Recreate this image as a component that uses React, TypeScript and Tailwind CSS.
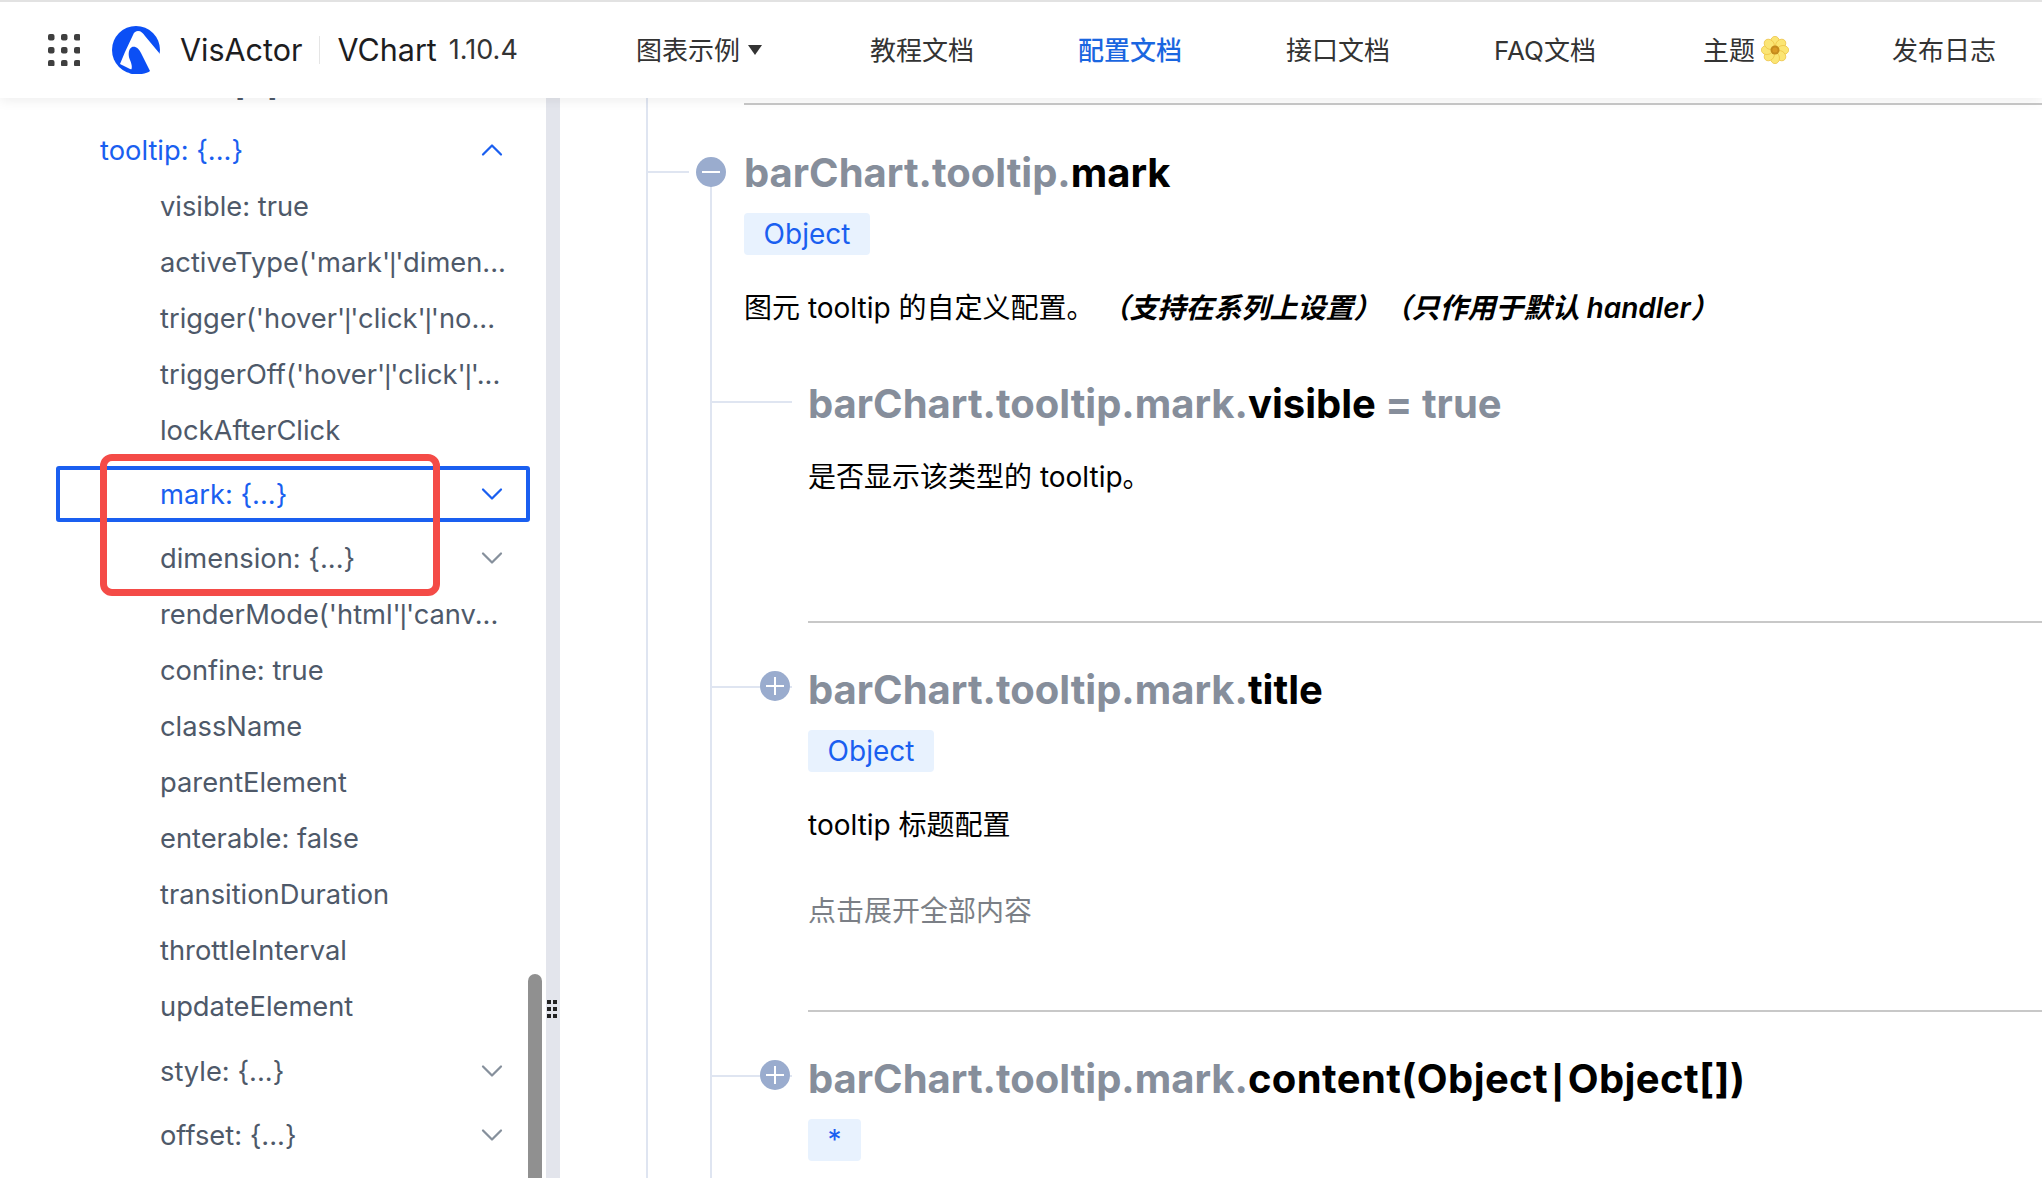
import { Fragment, type ReactNode } from "react"
import { ChevronDown, ChevronUp } from "lucide-react"

const navItems = ["教程文档", "配置文档", "接口文档", "FAQ文档"]

function Logo() {
  return (
    <svg width="48" height="48" viewBox="0 0 48 48">
      <circle cx="24" cy="24" r="24" fill="#0b4ff5" />
      <path d="M26 5C29 5 31 7 33 10L48 28V48H38L18 43L8 38L13 26L21 9C22 6 24 5 26 5Z" fill="#fff" />
      <path d="M20 21C24 20 27 23 29 27L38 45C36 47 28 49 24 48C21 48 19 48 17 47C20 44 21 41 18 34C16 30 16 23 20 21Z" fill="#0b4ff5" />
    </svg>
  )
}

function GridIcon() {
  return (
    <svg width="32" height="32" viewBox="0 0 32 32" fill="#3f3f3f">
      {[3, 16, 29].map((y) =>
        [3, 16, 29].map((x) => <rect key={`${x}-${y}`} x={x - 3} y={y - 3} width="6.5" height="6.5" rx="2" />)
      )}
    </svg>
  )
}

function Flower() {
  return (
    <svg width="28" height="28" viewBox="0 0 26 26">
      {[0, 45, 90, 135, 180, 225, 270, 315].map((a) => (
        <ellipse key={a} cx="13" cy="5.5" rx="4.2" ry="5.2" fill="#fbe573" stroke="#ecc144" strokeWidth="0.7" transform={`rotate(${a} 13 13)`} />
      ))}
      <circle cx="13" cy="13" r="4.2" fill="#c48a1c" />
      <circle cx="13" cy="13" r="2.4" fill="#d99a24" />
    </svg>
  )
}

function Header() {
  return (
    <header className="relative z-10 h-[98px] shrink-0 border-t-2 border-[#e2e2e2] bg-white flex items-center pl-[48px] pr-[46px] shadow-[0_2px_12px_rgba(0,0,0,0.08)]">
      <GridIcon />
      <div className="ml-[32px]"><Logo /></div>
      <span className="ml-[20px] text-[30.5px] text-[#1d1d1f]">VisActor</span>
      <span className="mx-[17px] h-[28px] w-px bg-[#e5e5e5]" />
      <span className="text-[30.5px] text-[#1d1d1f]">VChart</span>
      <span className="ml-[12px] text-[27px] text-[#333]">1.10.4</span>
      <nav className="ml-auto flex items-center gap-[104px] text-[26px] text-[#333]">
        <span className="flex items-center gap-[8px] mr-[4px]">
          图表示例
          <svg width="14" height="10" viewBox="0 0 14 10"><path d="M0 0H14L7 10Z" fill="#333" /></svg>
        </span>
        {navItems.map((item) => (
          <span key={item} className={item === "配置文档" ? "font-medium text-[#1a66e0]" : ""}>{item}</span>
        ))}
        <span className="flex items-center gap-[6px] ml-[3px] -mr-[1px]">主题 <Flower /></span>
        <span>发布日志</span>
      </nav>
    </header>
  )
}

// Inter's pipe is taller than the one in the page, so it gets its own font
function Piped({ text }: { text: string }) {
  return (
    <>
      {text.split("|").map((part, i) => (
        <Fragment key={i}>
          {i > 0 && <span className="-mx-px font-['Liberation_Sans']">|</span>}
          {part}
        </Fragment>
      ))}
    </>
  )
}

function Row({ label, className = "" }: { label: string; className?: string }) {
  return (
    <div className={`h-[56px] pl-[160px] flex items-center text-[#4e5969] whitespace-pre ${className}`}>
      <span><Piped text={label} /></span>
    </div>
  )
}

function ExpandRow({ label, active, className = "mt-[8px]" }: { label: string; active?: boolean; className?: string }) {
  return (
    <div className={`${className} h-[56px] ml-[56px] w-[474px] pl-[100px] pr-[16px] flex items-center justify-between rounded-[3px] border-[4px] ${active ? "border-[#1a5ff0] text-[#1a5ff0]" : "border-transparent text-[#4e5969]"}`}>
      <span className="pt-[2px]">{label}</span>
      <ChevronDown size={36} strokeWidth={1.5} className={active ? "text-[#1a5ff0]" : "text-[#86909c]"} />
    </div>
  )
}

function Sidebar() {
  return (
    <aside className="relative w-[546px] shrink-0 overflow-hidden text-[27.3px]">
      <div className="-mt-[39px]">
        <div className="h-[56px] pl-[100px] flex items-center text-[#4e5969]">crosshair: [...]</div>
        <div className="mt-[8px] h-[56px] pl-[100px] pr-[36px] flex items-center justify-between text-[#1a5ff0]">
          <span>tooltip: {"{...}"}</span>
          <ChevronUp size={36} strokeWidth={1.5} className="-mt-[2px]" />
        </div>
        <Row label="visible: true" />
        <Row label="activeType('mark'|'dimen..." />
        <Row label="trigger('hover'|'click'|'no..." />
        <Row label="triggerOff('hover'|'click'|'..." />
        <Row label="lockAfterClick" />
        <ExpandRow label="mark: {...}" active className="mt-[7px]" />
        <ExpandRow label="dimension: {...}" />
        <Row label="renderMode('html'|'canv..." className="mt-px" />
        <Row label="confine: true" />
        <Row label="className" />
        <Row label="parentElement" />
        <Row label="enterable: false" />
        <Row label="transitionDuration" />
        <Row label="throttleInterval" />
        <Row label="updateElement" />
        <ExpandRow label="style: {...}" />
        <ExpandRow label="offset: {...}" />
      </div>
      {/* scrollbar + highlight lie over the list */}
      <div className="absolute left-[528px] top-[876px] bottom-0 w-[14px] rounded-t-full bg-[#909090]" />
      <div className="absolute left-[100px] top-[356px] h-[142px] w-[340px] rounded-[12px] border-[7px] border-[#f44b47]" />
    </aside>
  )
}

function Divider() {
  return (
    <div className="relative w-[14px] shrink-0 bg-[#e3e5ec]">
      <div className="absolute left-[1px] top-[902px] grid grid-cols-2 gap-x-[2px] gap-y-[3px]">
        {[0, 1, 2, 3, 4, 5].map((i) => <span key={i} className="h-[4px] w-[4px] bg-[#222]" />)}
      </div>
    </div>
  )
}

function Badge({ text, wide = true }: { text: string; wide?: boolean }) {
  return (
    <div className={`mt-[16px] h-[42px] rounded-[4px] bg-[#e8f2fe] text-[#1a5ff0] text-[28px] flex justify-center ${wide ? "w-[126px] items-center" : "w-[53px] items-start"}`}>
      {text}
    </div>
  )
}

function Toggle({ open, className }: { open?: boolean; className: string }) {
  return (
    <svg width="30" height="30" viewBox="0 0 30 30" className={className}>
      <circle cx="15" cy="15" r="15" fill="#9aacce" />
      <path d={open ? "M6 15H24" : "M6 15H24M15 6V24"} stroke="#fff" strokeWidth="2" />
    </svg>
  )
}

function Title({ prefix, name, suffix }: { prefix: string; name: ReactNode; suffix?: string }) {
  return (
    <h2 className="h-[48px] flex items-center text-[40px] font-bold leading-none whitespace-pre">
      <span className="text-[#868e9b]">{prefix}</span>
      <span className="text-black">{name}</span>
      {suffix && <span className="text-[#868e9b]">{suffix}</span>}
    </h2>
  )
}

function Content() {
  return (
    <main className="flex-1 min-w-0 overflow-hidden pl-[86px] text-[28px] text-black">
      {/* outer tree line */}
      <div className="h-full border-l-2 border-[#dfe5f1] pt-[5px]">
        <div className="ml-[96px] h-[2px] bg-[#c8c8c8]" />
        <section className="relative pl-[96px] pt-[44px]">
          <span className="absolute left-0 top-[66px] h-[2px] w-[41px] bg-[#dfe5f1]" />
          <Toggle open className="absolute left-[48px] top-[52px]" />
          <Title prefix="barChart.tooltip." name="mark" />
          <Badge text="Object" />
          <p className="mt-[33px] leading-[40px] flex">
            图元 tooltip 的自定义配置。
            <em className="ml-[7px] font-semibold">（支持在系列上设置）</em>
            <em className="ml-[2px] font-semibold">（只作用于默认 handler）</em>
          </p>
        </section>
        {/* inner tree line */}
        <div className="ml-[62px] h-full border-l-2 border-[#dfe5f1] pl-[96px] -mt-[142px] pt-[194px]">
          <section className="relative">
            <span className="absolute -left-[96px] top-[21px] h-[2px] w-[80px] bg-[#dfe5f1]" />
            <Title prefix="barChart.tooltip.mark." name="visible" suffix=" = true" />
            <p className="mt-[29px] leading-[40px]">是否显示该类型的 tooltip。</p>
            <div className="mt-[124px] h-[2px] bg-[#c8c8c8]" />
          </section>
          <section className="relative mt-[43px]">
            <span className="absolute -left-[96px] top-[20px] h-[2px] w-[80px] bg-[#dfe5f1]" />
            <Toggle className="absolute -left-[48px] top-[5px]" />
            <Title prefix="barChart.tooltip.mark." name="title" />
            <Badge text="Object" />
            <p className="mt-[33px] leading-[40px]">tooltip 标题配置</p>
            <p className="mt-[46px] leading-[40px] text-[#7b7f86]">点击展开全部内容</p>
            <div className="mt-[79px] h-[2px] bg-[#c8c8c8]" />
          </section>
          <section className="relative mt-[43px]">
            <span className="absolute -left-[96px] top-[20px] h-[2px] w-[80px] bg-[#dfe5f1]" />
            <Toggle className="absolute -left-[48px] top-[5px]" />
            <Title
              prefix="barChart.tooltip.mark."
              name={<span className="tracking-[0.4px]">content(Object<span className="mx-[4px] font-['Liberation_Sans']">|</span>Object[])</span>}
            />
            <Badge text="*" wide={false} />
          </section>
        </div>
      </div>
    </main>
  )
}

export default function App() {
  return (
    <div className="h-[1178px] w-[2042px] overflow-hidden bg-white flex flex-col [font-feature-settings:'calt'_0] font-['Inter','Noto_Sans_CJK_SC',sans-serif]">
      <Header />
      <div className="flex flex-1 min-h-0">
        <Sidebar />
        <Divider />
        <Content />
      </div>
    </div>
  )
}
